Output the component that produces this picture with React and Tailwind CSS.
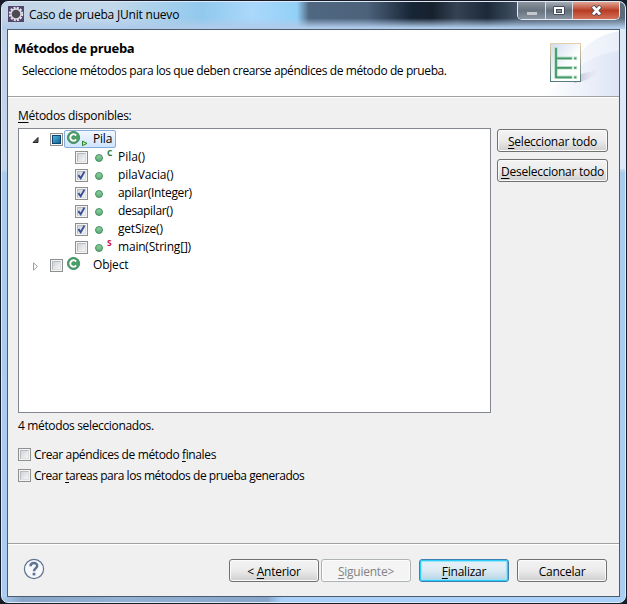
import React from "react";

function Check({ state }) {
  return (
    <span className="flex size-[13px] shrink-0 items-center justify-center border border-[#8e8f8f] bg-[#f4f4f4]">
      {state === "mixed" ? (
        <span className="size-[9px] border border-[#12456e] bg-linear-to-br from-[#4fb4de] to-[#12649c]" />
      ) : (
        <span className="flex size-[9px] items-center justify-center border border-[#b8bcc2] border-r-[#dcdee0] border-b-[#dcdee0] bg-linear-to-br from-[#cfd3d8] to-[#f6f6f6]">
          {state === "on" && (
            <svg className="size-[9px] shrink-0" viewBox="0 0 9 9" fill="none" stroke="#364f98" strokeWidth="1.9">
              <path d="M1.4 4.2 L3.7 7.2 L7.4 0.6" />
            </svg>
          )}
        </span>
      )}
    </span>
  );
}

function ClassIcon({ run }) {
  return (
    <svg className="h-[18px] w-[24px] shrink-0" viewBox="0 0 24 18">
      <circle cx="6.5" cy="7.5" r="6.1" fill="#4aa168" stroke="#2f7f50" strokeWidth="0.8" />
      <path d="M9.1 5.7 A3.2 3.2 0 1 0 9.1 9.3" fill="none" stroke="#2f7f50" strokeWidth="3" />
      <path d="M9.1 5.7 A3.2 3.2 0 1 0 9.1 9.3" fill="none" stroke="#fff" strokeWidth="2.1" />
      {run && <path d="M15.5 11.2 L20 13.4 L15.5 15.6 Z" fill="#c8eeb4" stroke="#22851e" strokeWidth="1" />}
    </svg>
  );
}

function Method({ name, on, badge, tracking = "tracking-[-0.2px]" }) {
  return (
    <div className="flex h-[18px] items-center pl-[56px]">
      <Check state={on ? "on" : "off"} />
      <span className="relative top-[0.5px] ml-[7px] size-[8px] rounded-full border border-[#3c8c5a] bg-linear-to-b from-[#8fd0a0] to-[#5fae7b]">
        {badge && (
          <span className={`absolute -top-[6px] left-[11px] text-[8.5px] leading-[8px] font-bold ${badge === "C" ? "text-[#138039]" : "text-[#c3123f]"}`}>
            {badge}
          </span>
        )}
      </span>
      <span className={`ml-[15px] ${tracking}`}>{name}</span>
    </div>
  );
}

function Button({ children, className = "w-[90px]", kind = "normal" }) {
  const skin = {
    normal: "border-[#707070] from-[#f3f3f3] via-[#ebebeb] via-50% to-[#cfcfcf] shadow-[inset_0_0_0_1px_#fbfbfb]",
    disabled: "border-[#adb2b5] from-[#f4f4f4] via-[#f4f4f4] to-[#f4f4f4] text-[#838383] shadow-[inset_0_0_0_1px_#fcfcfc]",
    primary: "border-[#3c7fb1] from-[#eaf3f8] via-[#dcebf3] via-50% to-[#b4d3e4] shadow-[inset_0_0_0_1px_#2bcdf8,inset_0_0_1px_2px_#9be4f8]",
  }[kind];
  return (
    <button className={`flex h-[23px] shrink-0 items-center justify-center rounded-[3px] border bg-linear-to-b pt-[2px] tracking-[-0.25px] whitespace-nowrap ${skin} ${className}`}>
      <span>{children}</span>
    </button>
  );
}

const U = ({ children }) => <span className="underline underline-offset-2">{children}</span>;

function Gear() {
  return (
    <svg className="size-[16px]" viewBox="0 0 16 16">
      <rect width="16" height="16" fill="#54456f" />
      <circle cx="8" cy="8" r="6.2" fill="none" stroke="#e8e6ee" strokeWidth="2" strokeDasharray="2 1.25" />
      <circle cx="8" cy="8" r="5" fill="#4c4b55" stroke="#dedde3" strokeWidth="1.4" />
    </svg>
  );
}

export default function App() {
  return (
    <div className="h-[604px] w-[627px] overflow-hidden bg-[#171c28] p-px font-['Open_Sans','Noto_Sans',sans-serif] text-[12px] leading-[18px] tracking-[-0.2px] text-black">
      <div className="flex h-[602px] w-[625px] flex-col rounded-[7px] border border-[#dfeaf6] bg-[linear-gradient(90deg,transparent_615px,#dbe9f8_618px),linear-gradient(90deg,#a9c9ec_0px,#88a5c8_20px,#93b1d3_120px,#87a5c9_265px,#a9d0f8_280px),linear-gradient(180deg,#bccfe6_0px,#c3d7ee_168px,#a9cbee_171px,#abcdf1_100%)] bg-size-[100%_167px,100%_5px,100%_100%] bg-position-[0_0,0_100%,0_0] bg-no-repeat px-[5px]">
        <div className="-mx-[5px] flex h-[27px] shrink-0 rounded-t-[6px] bg-[linear-gradient(180deg,transparent_60%,#b0cbea_95%),linear-gradient(90deg,#c4d5e5_0,#c2d8ea_110px,#91c9ed_200px,#aad8fb_250px,#93d0f6_295px,#506781_307px,#4c627b_365px,#172535_410px,#17212e_430px,#344253_455px,#1c2938_485px,#425264_515px,#5c6b7b_620px)]">
          <div className="flex flex-1 items-start gap-[5px] pt-[4px] pl-[6px]">
            <Gear />
            <span className="tracking-[-0.2px]">Caso de prueba JUnit nuevo</span>
          </div>
          <div className="mr-[5px] flex h-[18px] w-[103px] overflow-hidden rounded-b-[5px] border border-t-0 border-[#e4ebf2]">
            <div className="flex w-[28px] items-center justify-center border-r border-[#d4dae1] bg-linear-to-b from-[#8b949e] via-[#68737f] to-[#8995a2]">
              <span className="mt-[5px] h-[3px] w-[10px] bg-[#c5c9ce]" />
            </div>
            <div className="flex w-[27px] items-center justify-center border-r border-[#d4dae1] bg-linear-to-b from-[#a7afb7] via-[#626e7c] to-[#8995a2]">
              <span className="flex h-[9px] w-[12px] items-center justify-center rounded-[1px] border border-[#484f5c] bg-white">
                <span className="h-[4px] w-[6px] border border-[#484f5c] bg-[#828d99]" />
              </span>
            </div>
            <div className="flex flex-1 items-center justify-center bg-linear-to-b from-[#dfa594] via-[#b83b24] to-[#d57058]">
              <svg className="h-[11px] w-[13px]" viewBox="0 0 13 11" fill="none">
                <path d="M2.6 1.2 L10.4 9.8 M10.4 1.2 L2.6 9.8" stroke="#55505a" strokeWidth="4.6" />
                <path d="M3 1.6 L10 9.4 M10 1.6 L3 9.4" stroke="#fff" strokeWidth="2.8" />
              </svg>
            </div>
          </div>
        </div>
        <div className="flex h-[568px] w-[613px] flex-col border border-[#4c5c6e] bg-[#f0f0f0]">
          <header className="flex h-[67px] shrink-0 justify-between border-b border-[#a0a0a0] bg-white">
            <div className="pt-[9px] pl-[6px]">
              <h1 className="text-[13px] font-bold tracking-[-0.3px]">Métodos de prueba</h1>
              <p className="mt-[5px] ml-[8px] tracking-[-0.4px]">Seleccione métodos para los que deben crearse apéndices de método de prueba.</p>
            </div>
            <svg className="h-[66px] w-[75px]" viewBox="0 0 75 66">
              <defs>
                <linearGradient id="band"><stop offset="0" stopColor="#fff" /><stop offset="1" stopColor="#dbe3f5" /></linearGradient>
                <linearGradient id="paper" x2="1" y2="1"><stop offset="0" stopColor="#cfdced" /><stop offset=".6" stopColor="#fff" /></linearGradient>
                <linearGradient id="edge" x2="0" y2="1"><stop offset="0" stopColor="#e5ceaa" /><stop offset="1" stopColor="#547d7b" /></linearGradient>
                <linearGradient id="shade"><stop offset="0" stopColor="#a5a4bd" /><stop offset="1" stopColor="#e6e8f4" stopOpacity="0" /></linearGradient>
              </defs>
              <path d="M0 66 C10 60 26 36 38 21 C48 9 60 4 75 1 V66 Z" fill="url(#band)" opacity=".6" />
              <path d="M0 66 C10 60 24 46 37 36 C48 27 60 23 75 21 V66 Z" fill="url(#band)" opacity=".85" />
              <path d="M30 53 L37 44 L57 39 Q47 51 30 53" fill="url(#shade)" opacity=".8" />
              <rect x="6.5" y="13.5" width="30" height="38" fill="url(#paper)" stroke="url(#edge)" />
              <path d="M12 17 V48.5 M12 28.3 H28.5 M12 37.8 H28.5 M12 47.3 H28.5 M29.5 28.3 H33.2 M29.5 37.8 H33.2 M29.5 47.3 H33.2" stroke="#b9dfc8" strokeWidth="3.6" />
              <path d="M12 18 V48.3 M12 28.3 H27.8 M12 37.8 H27.8 M12 47.3 H27.8 M30.2 28.3 H32.2 M30.2 37.8 H32.2 M30.2 47.3 H32.2" stroke="#45976a" strokeWidth="1.8" />
            </svg>
          </header>
          <main className="flex flex-1 flex-col border-t border-white pl-[10px]">
            <div className="mt-[9px] h-[21px] tracking-[-0.3px]"><U>M</U>étodos disponibles:</div>
            <div className="flex gap-[6px]">
              <div className="h-[285px] w-[473px] shrink-0 border border-[#828790] bg-white pt-px">
                <div className="flex h-[18px] items-center pl-[13px]">
                  <svg className="mt-px h-[8px] w-[8px]" viewBox="0 0 8 8"><path d="M6 1.5 V6.5 H1 Z" fill="#595959" stroke="#262626" /></svg>
                  <span className="ml-[10px]"><Check state="mixed" /></span>
                  <span className="ml-px flex h-[18px] w-[52px] items-center rounded-[2px] border border-[#84acdd] bg-linear-to-b from-[#f1f7fe] to-[#cfe4fe] pl-[2px]">
                    <ClassIcon run />
                    <span className="ml-[2px]">Pila</span>
                  </span>
                </div>
                <Method name="Pila()" badge="C" tracking="tracking-[0px]" />
                <Method name="pilaVacia()" on tracking="tracking-[-0.1px]" />
                <Method name="apilar(Integer)" on tracking="tracking-[-0.32px]" />
                <Method name="desapilar()" on tracking="tracking-[-0.35px]" />
                <Method name="getSize()" on />
                <Method name="main(String[])" badge="S" />
                <div className="flex h-[18px] items-center pl-[13px]">
                  <svg className="mt-[2px] h-[9px] w-[8px]" viewBox="0 0 8 9"><path d="M1.5 .8 V8.2 L5.5 4.5 Z" fill="#fff" stroke="#a0a0a0" /></svg>
                  <span className="ml-[10px]"><Check /></span>
                  <span className="ml-[4px] flex items-center"><ClassIcon /><span className="ml-[2px]">Object</span></span>
                </div>
              </div>
              <div className="flex flex-col gap-[7px] pt-px">
                <Button className="w-[111px]"><U>S</U>eleccionar todo</Button>
                <Button className="w-[111px]"><U>D</U>eseleccionar todo</Button>
              </div>
            </div>
            <div className="mt-[4px] tracking-[-0.35px]">4 métodos seleccionados.</div>
            <label className="mt-[10px] flex h-[18px] items-center gap-[3px] tracking-[-0.38px]"><Check /><span className="mt-px">Crear apéndices de método <U>f</U>inales</span></label>
            <label className="mt-[3px] flex h-[18px] items-center gap-[3px] tracking-[-0.45px]"><Check /><span className="mt-px">Crear <U>t</U>areas para los métodos de prueba generados</span></label>
          </main>
          <footer className="flex h-[53px] shrink-0 items-start border-t border-[#a0a0a0] pr-[12px] pl-[15px] shadow-[inset_0_1px_#fff]">
            <svg className="mt-[14px] size-[22px]" viewBox="0 0 22 22" fill="none" stroke="#5f7394">
              <circle cx="11" cy="11" r="9.6" fill="#f7f8fb" strokeWidth="1.2" />
              <path d="M7.5 8.3 C7.5 3.9 14.4 4.1 14.2 8 C14.1 10.2 11 10.3 11 13.2" strokeWidth="2.5" />
              <path d="M11 14.8 V17.4" strokeWidth="2.8" />
            </svg>
            <div className="mt-[15px] ml-auto flex">
              <Button>&lt; <U>A</U>nterior</Button>
              <Button className="ml-[2px] w-[90px]" kind="disabled"><U>S</U>iguiente&gt;</Button>
              <Button className="ml-[8px] w-[90px]" kind="primary"><U>F</U>inalizar</Button>
              <Button className="ml-[8px] w-[90px]">Cancelar</Button>
            </div>
          </footer>
        </div>
      </div>
    </div>
  );
}
